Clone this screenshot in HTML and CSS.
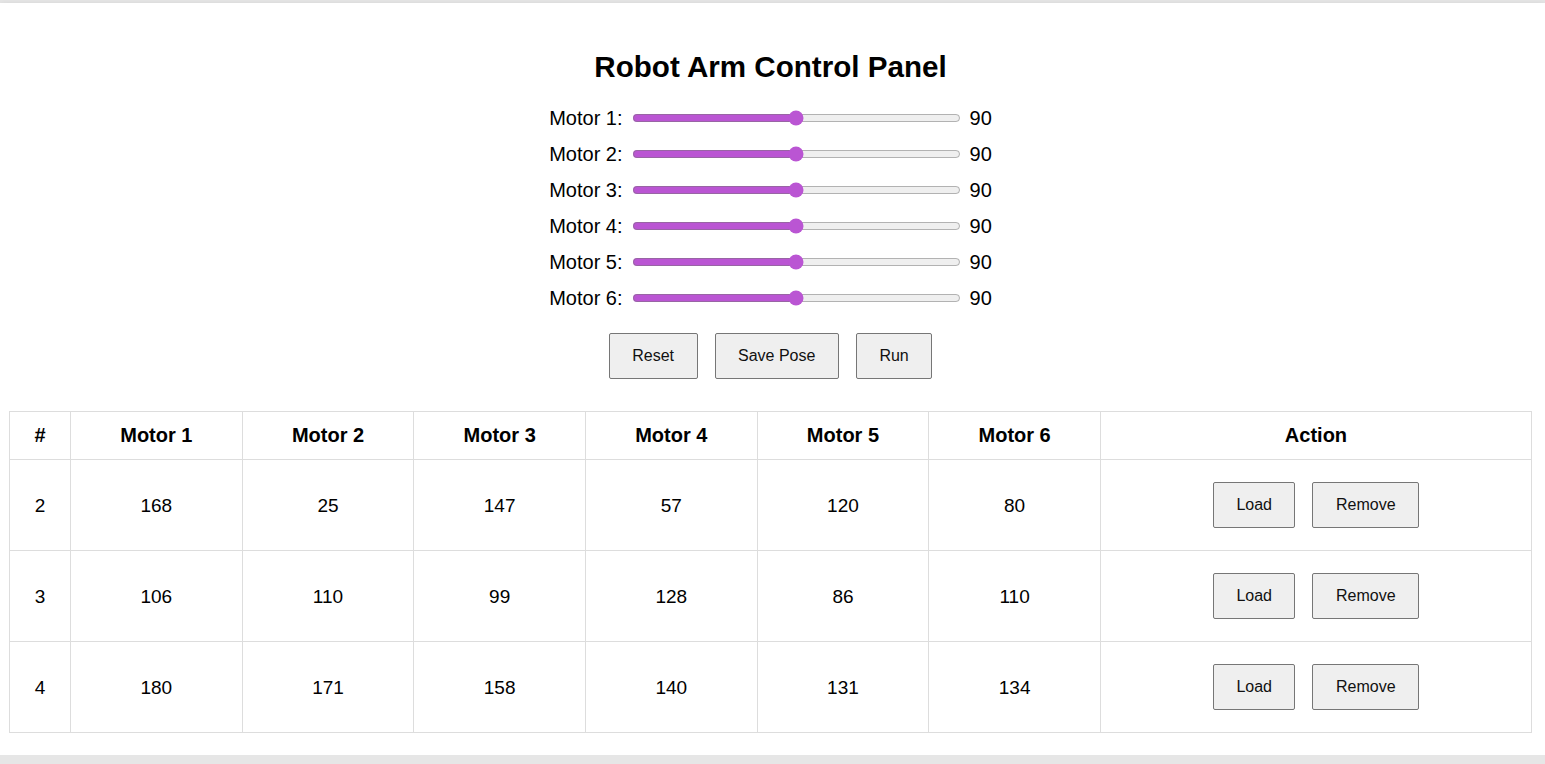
FILE: index.html
```html
<!DOCTYPE html>
<html lang="en">
<head>
<meta charset="utf-8">
<title>Robot Arm Control Panel</title>
<link rel="stylesheet" href="styles.css">
</head>
<body>
<div class="container">
  <h1 class="title">Robot Arm Control Panel</h1>
  <div class="sliders">
    <div class="slider-row"><label class="motor-label">Motor 1:</label><input class="range" type="range" min="0" max="180" value="90"><span class="motor-value">90</span></div>
    <div class="slider-row"><label class="motor-label">Motor 2:</label><input class="range" type="range" min="0" max="180" value="90"><span class="motor-value">90</span></div>
    <div class="slider-row"><label class="motor-label">Motor 3:</label><input class="range" type="range" min="0" max="180" value="90"><span class="motor-value">90</span></div>
    <div class="slider-row"><label class="motor-label">Motor 4:</label><input class="range" type="range" min="0" max="180" value="90"><span class="motor-value">90</span></div>
    <div class="slider-row"><label class="motor-label">Motor 5:</label><input class="range" type="range" min="0" max="180" value="90"><span class="motor-value">90</span></div>
    <div class="slider-row"><label class="motor-label">Motor 6:</label><input class="range" type="range" min="0" max="180" value="90"><span class="motor-value">90</span></div>
  </div>
  <div class="controls">
    <button class="btn">Reset</button>
    <button class="btn">Save Pose</button>
    <button class="btn">Run</button>
  </div>
  <table class="poses">
    <colgroup>
      <col class="c-num"><col class="c-motor"><col class="c-motor"><col class="c-motor"><col class="c-motor"><col class="c-motor"><col class="c-motor"><col>
    </colgroup>
    <thead>
      <tr><th>#</th><th>Motor 1</th><th>Motor 2</th><th>Motor 3</th><th>Motor 4</th><th>Motor 5</th><th>Motor 6</th><th>Action</th></tr>
    </thead>
    <tbody>
      <tr><td>2</td><td>168</td><td>25</td><td>147</td><td>57</td><td>120</td><td>80</td><td class="action"><div class="actions"><button class="btn">Load</button><button class="btn">Remove</button></div></td></tr>
      <tr><td>3</td><td>106</td><td>110</td><td>99</td><td>128</td><td>86</td><td>110</td><td class="action"><div class="actions"><button class="btn">Load</button><button class="btn">Remove</button></div></td></tr>
      <tr><td>4</td><td>180</td><td>171</td><td>158</td><td>140</td><td>131</td><td>134</td><td class="action"><div class="actions"><button class="btn">Load</button><button class="btn">Remove</button></div></td></tr>
    </tbody>
  </table>
</div>
</body>
</html>
```
FILE: styles.css
```css
html, body {
  margin: 0;
  padding: 0;
}
body {
  background: #e6e6e6;
  font-family: "Liberation Sans", Arial, sans-serif;
  color: #000;
  font-size: 19px;
}
.container {
  margin-top: 3px;
  background: #fff;
  padding: 20px 13px 22px 9px;
  box-shadow: 0 3px 8px rgba(0, 0, 0, 0.16);
}
.title {
  margin: 27px 0 16px;
  font-size: 29.6px;
  line-height: 34px;
  font-weight: bold;
  text-align: center;
}
.sliders {
  display: flex;
  flex-direction: column;
  align-items: center;
}
.slider-row {
  height: 36px;
  display: flex;
  align-items: center;
  gap: 9px;
}
.motor-label {
  font-size: 20px;
  line-height: 22px;
}
.range {
  width: 329px;
  margin: 0;
  accent-color: mediumorchid;
}
.motor-value {
  font-size: 20px;
  line-height: 22px;
}
.controls {
  display: flex;
  justify-content: center;
  gap: 17px;
  margin: 17px 0 32px;
}
.btn {
  font-family: "Liberation Sans", Arial, sans-serif;
  font-size: 16px;
  line-height: 20px;
  padding: 12px 22.5px;
  background: #efefef;
  color: #111;
  border: 1px solid #767676;
  border-radius: 2px;
  margin: 0;
}
.poses {
  width: 100%;
  border-collapse: collapse;
  table-layout: fixed;
}
.c-num { width: 61px; }
.c-motor { width: 171.67px; }
.poses th, .poses td {
  border: 1px solid #ddd;
  text-align: center;
}
.poses th {
  font-weight: bold;
  font-size: 20px;
  padding: 12px;
  line-height: 23px;
}
.poses td {
  padding: 22px 12px;
  line-height: 23px;
}
.actions {
  display: flex;
  justify-content: center;
  gap: 17px;
}
```
